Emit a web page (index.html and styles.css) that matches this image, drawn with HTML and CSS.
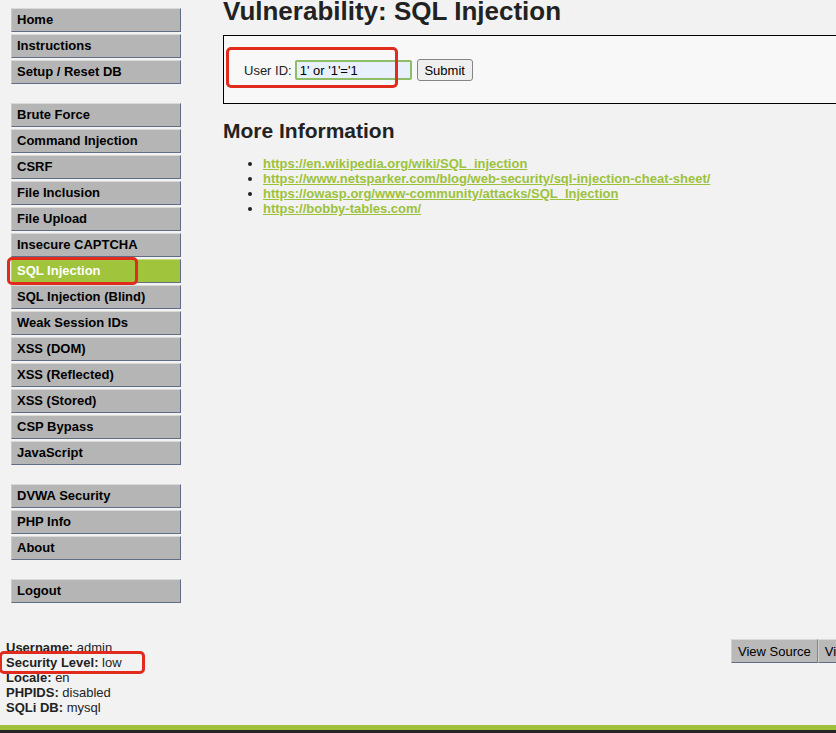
FILE: index.html
```
<!DOCTYPE html>
<html lang="en">
<head>
<meta charset="utf-8">
<title>Vulnerability: SQL Injection :: Damn Vulnerable Web Application</title>
<link rel="stylesheet" href="styles.css">
</head>
<body>
<div class="page">
  <div class="top">
    <nav class="sidebar">
      <ul class="menu">
        <li><a href="#">Home</a></li>
        <li><a href="#">Instructions</a></li>
        <li><a href="#">Setup / Reset DB</a></li>
      </ul>
      <ul class="menu">
        <li><a href="#">Brute Force</a></li>
        <li><a href="#">Command Injection</a></li>
        <li><a href="#">CSRF</a></li>
        <li><a href="#">File Inclusion</a></li>
        <li><a href="#">File Upload</a></li>
        <li><a href="#">Insecure CAPTCHA</a></li>
        <li><a href="#" class="selected">SQL Injection</a></li>
        <li><a href="#">SQL Injection (Blind)</a></li>
        <li><a href="#">Weak Session IDs</a></li>
        <li><a href="#">XSS (DOM)</a></li>
        <li><a href="#">XSS (Reflected)</a></li>
        <li><a href="#">XSS (Stored)</a></li>
        <li><a href="#">CSP Bypass</a></li>
        <li><a href="#">JavaScript</a></li>
      </ul>
      <ul class="menu">
        <li><a href="#">DVWA Security</a></li>
        <li><a href="#">PHP Info</a></li>
        <li><a href="#">About</a></li>
      </ul>
      <ul class="menu">
        <li><a href="#">Logout</a></li>
      </ul>
    </nav>
    <main class="main">
      <h1 class="title">Vulnerability: SQL Injection</h1>
      <div class="code-area">
        <form class="id-form">
          <label class="id-label" for="uid">User ID:</label>
          <input class="id-input" id="uid" type="text" value="1' or '1'='1">
          <button class="submit" type="button">Submit</button>
        </form>
      </div>
      <h2 class="subtitle">More Information</h2>
      <ul class="links">
        <li><a href="#">https://en.wikipedia.org/wiki/SQL_injection</a></li>
        <li><a href="#">https://www.netsparker.com/blog/web-security/sql-injection-cheat-sheet/</a></li>
        <li><a href="#">https://owasp.org/www-community/attacks/SQL_Injection</a></li>
        <li><a href="#">https://bobby-tables.com/</a></li>
      </ul>
    </main>
  </div>
  <div class="footer-row">
    <div class="info">
      <div><b>Username:</b> admin</div>
      <div><b>Security Level:</b> low</div>
      <div><b>Locale:</b> en</div>
      <div><b>PHPIDS:</b> disabled</div>
      <div><b>SQLi DB:</b> mysql</div>
    </div>
    <div class="source-buttons">
      <button class="src-btn" type="button">View Source</button>
      <button class="src-btn" type="button">View Help</button>
    </div>
  </div>
  <div class="bottom-bar"></div>

  <div class="mark mark-menu"></div>
  <div class="mark mark-form"></div>
  <div class="mark mark-level"></div>
</div>
</body>
</html>
```
FILE: styles.css
```
html, body {
  margin: 0;
  padding: 0;
  overflow: hidden;
  background: #f2f2f2;
}

body {
  font-family: "Liberation Sans", Arial, sans-serif;
  font-size: 13px;
  color: #000;
}

.page {
  position: relative;
  width: 900px;
  min-height: 733px;
}

.top {
  display: flex;
  align-items: flex-start;
}

.sidebar {
  width: 170px;
  padding: 8px 0 0 11px;
  flex: none;
  display: flex;
  flex-direction: column;
  gap: 19px;
}

.menu {
  list-style: none;
  margin: 0;
  padding: 0;
  display: flex;
  flex-direction: column;
  gap: 2px;
}

.menu a {
  display: block;
  height: 22px;
  line-height: 22px;
  padding-left: 5px;
  background: #b5b5b5;
  border-top: 1px solid #dadada;
  border-left: 1px solid #c9c9c9;
  border-right: 1px solid #5f6d87;
  border-bottom: 1px solid #5f6d87;
  color: #000;
  font-weight: bold;
  text-decoration: none;
  white-space: nowrap;
}

.menu a.selected {
  background: #a0c43b;
  color: #fff;
  border-top-color: #c4dc7c;
  border-left-color: #b8d46a;
}

.main {
  margin-left: 42px;
  flex: 1;
  color: #222;
}

.title {
  margin: -4px 0 9px 0;
  font-size: 26px;
  line-height: 30px;
  font-weight: bold;
  color: #222;
  white-space: nowrap;
}

.code-area {
  border: 1px solid #000;
  background: #f7f8f7;
  padding: 23px 20px 22px 20px;
}

.id-form {
  display: flex;
  align-items: center;
  margin: 0;
}

.id-label {
  color: #222;
  margin-right: 3px;
}

.id-input {
  box-sizing: border-box;
  width: 117px;
  height: 20px;
  margin: 0 5px 0 0;
  padding: 0 3px;
  border: 2px solid #8dbd67;
  border-radius: 2px;
  background: #e8f0fe;
  font-family: "Liberation Sans", Arial, sans-serif;
  font-size: 13px;
  color: #000;
  outline: none;
}

.submit {
  box-sizing: border-box;
  width: 56px;
  height: 22px;
  padding: 0;
  border: 1px solid #858585;
  border-radius: 3px;
  background: #efefef;
  font-family: "Liberation Sans", Arial, sans-serif;
  font-size: 13px;
  color: #000;
}

.subtitle {
  margin: 15px 0 13px 0;
  font-size: 21px;
  line-height: 24px;
  font-weight: bold;
  color: #222;
}

.links {
  margin: 0;
  padding-left: 40px;
  line-height: 15px;
}

.links a {
  color: #9cc23b;
  font-weight: bold;
  text-decoration: underline;
}

.footer-row {
  display: flex;
  justify-content: space-between;
  align-items: flex-start;
  margin-top: 37px;
  padding: 0 10px 0 6px;
}

.info {
  line-height: 15px;
  color: #222;
}

.info b {
  font-weight: bold;
}

.source-buttons {
  display: flex;
  gap: 0;
  margin-top: -1px;
}

.src-btn {
  box-sizing: border-box;
  height: 24px;
  padding: 0 6px;
  background: #b9b9b9;
  border: none;
  border-top: 1px solid #dadada;
  border-left: 1px solid #cfcfcf;
  border-right: 1px solid #7a8598;
  border-bottom: 1px solid #5f6d87;
  font-family: "Liberation Sans", Arial, sans-serif;
  font-size: 13px;
  color: #000;
}

.bottom-bar {
  margin-top: 10px;
  height: 5px;
  background: #9fc13a;
  border-bottom: 20px solid #262626;
}

.mark {
  position: absolute;
  box-sizing: border-box;
  border: 3px solid #e02b1d;
  border-radius: 5px;
  pointer-events: none;
}

.mark-menu {
  left: 7px;
  top: 257px;
  width: 131px;
  height: 28px;
}

.mark-form {
  left: 226px;
  top: 47px;
  width: 172px;
  height: 41px;
}

.mark-level {
  left: -1px;
  top: 651px;
  width: 146px;
  height: 23px;
}
```
